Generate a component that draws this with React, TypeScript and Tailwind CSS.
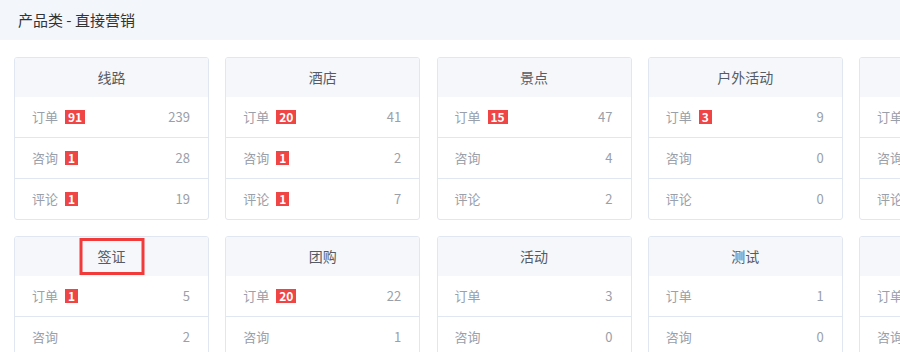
import React from 'react';

type Row = { label: string; badge?: number; value: number };
type Card = { title: string; rows: Row[]; marked?: boolean };

const cards: Card[] = [
  { title: '线路', rows: [{ label: '订单', badge: 91, value: 239 }, { label: '咨询', badge: 1, value: 28 }, { label: '评论', badge: 1, value: 19 }] },
  { title: '酒店', rows: [{ label: '订单', badge: 20, value: 41 }, { label: '咨询', badge: 1, value: 2 }, { label: '评论', badge: 1, value: 7 }] },
  { title: '景点', rows: [{ label: '订单', badge: 15, value: 47 }, { label: '咨询', value: 4 }, { label: '评论', value: 2 }] },
  { title: '户外活动', rows: [{ label: '订单', badge: 3, value: 9 }, { label: '咨询', value: 0 }, { label: '评论', value: 0 }] },
  { title: '', rows: [{ label: '订单', value: 0 }, { label: '咨询', value: 0 }, { label: '评论', value: 0 }] },
  { title: '签证', marked: true, rows: [{ label: '订单', badge: 1, value: 5 }, { label: '咨询', value: 2 }, { label: '评论', value: 0 }] },
  { title: '团购', rows: [{ label: '订单', badge: 20, value: 22 }, { label: '咨询', value: 1 }, { label: '评论', value: 0 }] },
  { title: '活动', rows: [{ label: '订单', value: 3 }, { label: '咨询', value: 0 }, { label: '评论', value: 0 }] },
  { title: '测试', rows: [{ label: '订单', value: 1 }, { label: '咨询', value: 0 }, { label: '评论', value: 0 }] },
  { title: '', rows: [{ label: '订单', value: 0 }, { label: '咨询', value: 0 }, { label: '评论', value: 0 }] },
];

function StatCard({ card }: { card: Card }) {
  return (
    <div className="w-[195px] flex-none rounded-[3px] border border-[#e1e7f0] bg-white overflow-hidden">
      {/* Card header */}
      <div className="relative h-[39px] bg-[#f5f7fa] flex items-center justify-center text-[14px] text-[#555b66]">
        {card.title}
        {card.marked && (
          <div className="absolute left-1/2 top-[1px] -translate-x-1/2 w-[65px] h-[37px] border-[3px] border-[#f23a3a]" />
        )}
      </div>
      {card.rows.map((row, idx) => (
        <div
          key={idx}
          className={`flex items-center justify-between pl-[17px] pr-[18px] text-[13px] text-[#9aa0aa] ${
            idx < card.rows.length - 1 ? 'h-[41px] border-b border-[#e1e7f0]' : 'h-[40px]'
          }`}
        >
          <div className="flex items-center">
            <span>{row.label}</span>
            {row.badge !== undefined && (
              <span className="ml-[7px] h-[14px] px-[3px] bg-[#f04545] text-white text-[12px] font-bold leading-[14px]">
                {row.badge}
              </span>
            )}
          </div>
          <span>{row.value}</span>
        </div>
      ))}
    </div>
  );
}

export default function App() {
  return (
    <div className="w-[900px] h-[352px] overflow-hidden bg-white font-['Noto_Sans_CJK_SC',sans-serif]">
      <div className="h-[40px] bg-[#f3f6fa] flex items-center pl-[18px] text-[15px] text-[#333]">
        产品类 - 直接营销
      </div>
      <div className="pt-[17px] pl-[14px] flex flex-col gap-[16px]">
        <div className="flex gap-[16.25px]">
          {cards.slice(0, 5).map((c, i) => (
            <StatCard key={i} card={c} />
          ))}
        </div>
        <div className="flex gap-[16.25px]">
          {cards.slice(5).map((c, i) => (
            <StatCard key={i} card={c} />
          ))}
        </div>
      </div>
    </div>
  );
}
